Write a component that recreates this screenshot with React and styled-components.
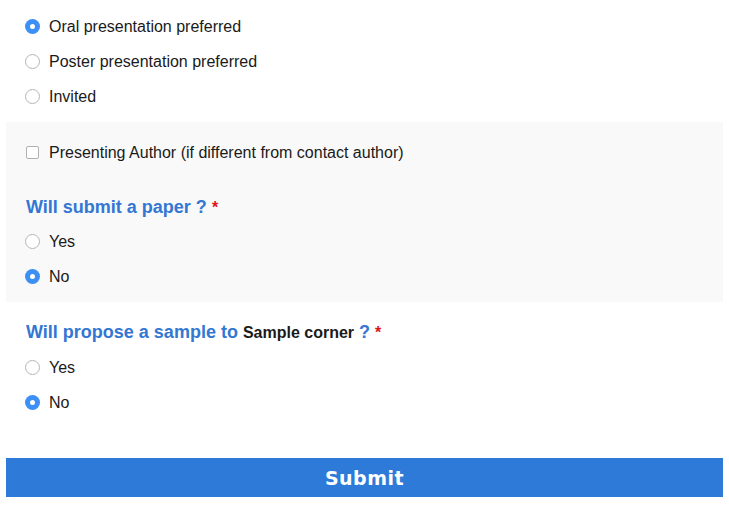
import React from 'react';
import styled, { createGlobalStyle } from 'styled-components';

const GlobalStyle = createGlobalStyle`
  body {
    margin: 0;
    background: #ffffff;
    font-family: "Liberation Sans", Arial, sans-serif;
    color: #1a1a1a;
  }
`;

const Form = styled.form`
  width: 717px;
  margin: 0 6px;
  padding-top: 9px;
`;

const Group = styled.div`
  padding: ${({ $pad }) => $pad || '0 19px'};
  margin-top: ${({ $gap }) => $gap || '0'};
  background: ${({ $shaded }) => ($shaded ? '#f9f9f9' : 'transparent')};
`;

const Option = styled.label`
  display: flex;
  align-items: center;
  height: 35px;
  font-size: 16px;
  color: #1a1a1a;
  cursor: pointer;
`;

const Radio = styled.span`
  box-sizing: border-box;
  width: 15px;
  height: 15px;
  border-radius: 50%;
  margin-right: 9px;
  flex-shrink: 0;
  border: ${({ $checked }) => ($checked ? 'none' : '1px solid #b5b5b5')};
  background: ${({ $checked }) => ($checked ? '#3b8ff5' : '#fff')};
  display: flex;
  align-items: center;
  justify-content: center;

  &::after {
    content: '';
    display: ${({ $checked }) => ($checked ? 'block' : 'none')};
    width: 5px;
    height: 5px;
    border-radius: 50%;
    background: #fff;
  }
`;

const Box = styled.span`
  box-sizing: border-box;
  width: 13px;
  height: 13px;
  border: 1px solid #b0b0b0;
  border-radius: 2px;
  background: #fff;
  margin-right: 10px;
  margin-left: 1px;
`;

const Question = styled.h3`
  margin: ${({ $top }) => $top || '0'} 0 ${({ $bottom }) => $bottom || '7px'};
  padding-left: 1px;
  font-size: 18px;
  font-weight: bold;
  color: #3377d3;
  line-height: 20px;
`;

const Plain = styled.span`
  color: #1a1a1a;
  font-size: 16px;
`;

const Star = styled.span`
  color: #e0121b;
  font-size: 16px;
`;

const SubmitButton = styled.button`
  display: block;
  width: 100%;
  height: 39px;
  margin-top: 38px;
  border: none;
  background: #2e7ad8;
  color: #fff;
  font-family: "DejaVu Sans", sans-serif;
  font-weight: bold;
  font-size: 19px;
  letter-spacing: 0.5px;
  cursor: pointer;
`;

const RadioOption = ({ label, checked }) => (
  <Option>
    <Radio $checked={checked} />
    {label}
  </Option>
);

export default function App() {
  return (
    <>
      <GlobalStyle />
      <Form onSubmit={(e) => e.preventDefault()}>
        <Group>
          <RadioOption label="Oral presentation preferred" checked />
          <RadioOption label="Poster presentation preferred" />
          <RadioOption label="Invited" />
        </Group>
        <Group $shaded $pad="13px 19px 8px" $gap="8px">
          <Option>
            <Box />
            Presenting Author (if different from contact author)
          </Option>
          <Question $top="27px" $bottom="6px">
            Will submit a paper ? <Star>*</Star>
          </Question>
          <RadioOption label="Yes" />
          <RadioOption label="No" checked />
        </Group>
        <Group>
          <Question $top="20px" $bottom="7px">
            Will propose a sample to <Plain>Sample corner</Plain> ? <Star>*</Star>
          </Question>
          <RadioOption label="Yes" />
          <RadioOption label="No" checked />
        </Group>
        <SubmitButton type="submit">Submit</SubmitButton>
      </Form>
    </>
  );
}
